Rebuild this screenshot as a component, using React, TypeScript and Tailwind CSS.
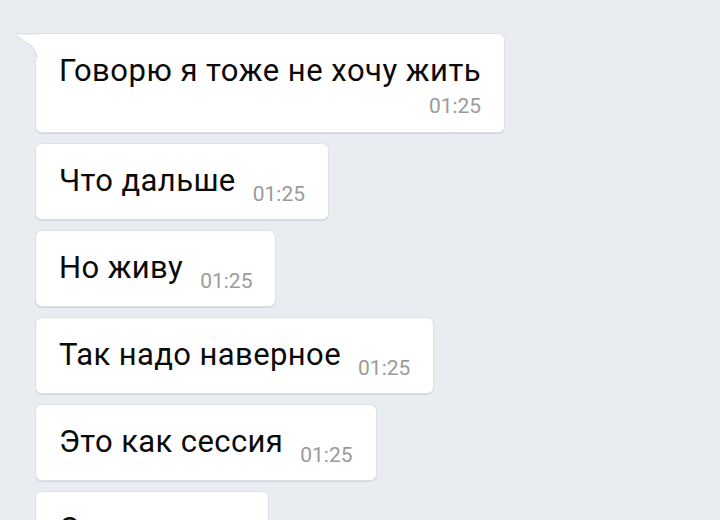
const messages = [
  { text: 'Что дальше', time: '01:25' },
  { text: 'Но живу', time: '01:25' },
  { text: 'Так надо наверное', time: '01:25' },
  { text: 'Это как сессия', time: '01:25' },
  { text: 'Сложно', time: '01:25' },
];

const Tail = () => (
  <svg
    className="absolute left-[-22px] top-[-1px]"
    width="24"
    height="26"
    viewBox="0 0 24 26"
  >
    <path d="M1 1 H24 V25 Q22 18 17 12.5 L2.2 2.6 Q0.6 1.4 1 1 Z" fill="#ffffff" />
    <path d="M24 1 H1.4 Q0.4 1.4 2.2 2.6 L17 12.5 Q22 18 23.4 25" fill="none" stroke="#d6dbe1" strokeWidth="1" />
  </svg>
);

const Time = ({ value, className = '' }: { value: string; className?: string }) => (
  <span className={`text-[21px] leading-[21px] text-[#9b9b9b] ${className}`}>{value}</span>
);

export default function App() {
  return (
    <div
      className="h-[520px] w-[720px] overflow-hidden bg-[#e9edf2]"
      style={{ fontFamily: 'Roboto, "Noto Sans", sans-serif' }}
    >
      <div className="flex flex-col items-start gap-[10px] pl-[35px] pt-[33px]">
        {/* first message with tail */}
        <div className="relative rounded-[7px] rounded-tl-none border border-[#dde1e6] bg-white px-[23px] pt-[18px] pb-[15px] shadow-[0_1px_0_#d2d7dd]">
          <Tail />
          <div className="text-[31px] leading-[37px] tracking-[0.5px] text-[#0a0a0a]">Говорю я тоже не хочу жить</div>
          <div className="mt-[7px] flex justify-end">
            <Time value="01:25" />
          </div>
        </div>

        {messages.map((m, i) => (
          <div
            key={i}
            className="flex items-start rounded-[7px] border border-[#dde1e6] bg-white px-[23px] pt-[18px] pb-[14px] shadow-[0_1px_0_#d2d7dd]"
          >
            <span className="text-[31px] leading-[37px] tracking-[0.4px] text-[#0a0a0a]">{m.text}</span>
            <Time value={m.time} className="ml-[17px] mt-[22px]" />
          </div>
        ))}
      </div>
    </div>
  );
}
